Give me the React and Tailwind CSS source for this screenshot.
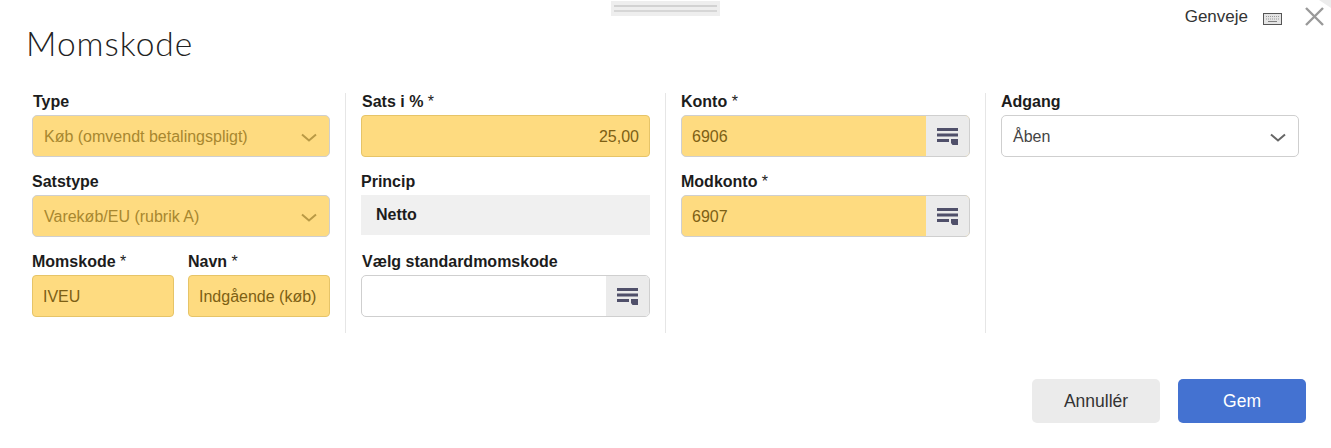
import React from 'react';

const ArrowDown = ({ className }) => (
  <svg className={className} width="16" height="9" viewBox="0 0 16 9" fill="none" stroke="currentColor" strokeWidth="2">
    <path d="M1 1.5l7 6 7-6" />
  </svg>
);

const ListIcon = () => (
  <svg width="22" height="18" viewBox="0 0 22 18" fill="#50506a">
    <rect x="0" y="1" width="21" height="3" />
    <rect x="0" y="6.5" width="21" height="3" />
    <rect x="0" y="12" width="12" height="3" />
    <path d="M14 12h7v6h-5.5l-1.5-2z" />
  </svg>
);

const Label = ({ children, inset }) => (
  <div className={`h-[22px] text-[16px] leading-[18px] font-bold text-[#1c1c1c] ${inset ? 'pl-px' : ''}`}>{children}</div>
);

const Star = () => <span className="font-normal"> *</span>;

const SelectBox = ({ value, locked }) => (
  <div
    className={`h-[42px] flex items-center justify-between pl-[11px] pr-[12px] rounded-[5px] border border-[#cfcfcf] text-[16px] ${
      locked ? 'bg-[#fedb80] text-[#a8872f]' : 'bg-white text-[#444444]'
    }`}
  >
    <span className="pt-[2px]">{value}</span>
    <ArrowDown className={`mt-[2px] ${locked ? 'text-[#b99a45]' : 'text-[#666666]'}`} />
  </div>
);

const TextBox = ({ value, right }) => (
  <div
    className={`h-[42px] flex items-center px-[10px] pt-[2px] rounded-[4px] border border-[#e6c468] bg-[#fedb80] text-[16px] text-[#7d6014] whitespace-nowrap ${
      right ? 'justify-end' : ''
    }`}
  >
    {value}
  </div>
);

const LookupBox = ({ value, filled }) => (
  <div
    className={`h-[42px] flex rounded-[5px] border border-[#cfcfcf] overflow-hidden text-[16px] text-[#7d6014] ${
      filled ? 'bg-[#fedb80]' : 'bg-white'
    }`}
  >
    <div className="flex-1 flex items-center px-[10px] pt-[2px]">{value}</div>
    <div className="w-[43px] flex items-center justify-center bg-[#ebebeb]">
      <ListIcon />
    </div>
  </div>
);

const Field = ({ label, inset, children, className = '' }) => (
  <div className={`mb-4 ${className}`}>
    <Label inset={inset}>{label}</Label>
    {children}
  </div>
);

export default function App() {
  return (
    <div className="relative w-[1331px] h-[448px] bg-white overflow-hidden font-['Liberation_Sans',Arial,sans-serif]">
      {/* drag handle */}
      <div className="absolute top-[1px] left-[611px] w-[109px] h-[15px] bg-[#eeeeee] flex flex-col justify-center gap-[3px] px-[3px]">
        <div className="h-[2px] bg-[#d2d2d2]" />
        <div className="h-[2px] bg-[#d6d6d6]" />
      </div>
      <svg className="absolute top-0 right-0" width="12" height="8" viewBox="0 0 12 8">
        <path d="M0 0h12v8z" fill="#ececec" />
      </svg>

      <div className="h-[28px] flex items-end justify-end pr-[7px]">
        <span className="text-[17px] leading-[20px] text-[#333333] mb-[1px]">Genveje</span>
        <svg className="ml-[15px] mb-[3px]" width="19" height="12" viewBox="0 0 19 12">
          <rect x="0.5" y="0.5" width="18" height="11" fill="#e4e4e4" stroke="#555555" />
          <path d="M3 3.5h13M3 6h13" stroke="#9a9a9a" strokeDasharray="1 1" />
          <path d="M5 8.5h9" stroke="#808080" />
        </svg>
        <svg className="ml-[23px] mb-[2px]" width="19" height="19" viewBox="0 0 19 19" stroke="#999999" strokeWidth="2.4">
          <path d="M1 1l17 17M18 1L1 18" />
        </svg>
      </div>

      <h1 className="h-[65px] pl-[26px] text-[33.5px] leading-[31px] tracking-[1px] font-light text-[#222222] font-['Lato',sans-serif]">Momskode</h1>

      <div className="flex h-[240px]">
        <div className="w-[346px] pl-[32px] pr-[15px] border-r border-[#e6e6e6]">
          <Field label="Type" inset>
            <SelectBox locked value="Køb (omvendt betalingspligt)" />
          </Field>
          <Field label="Satstype">
            <SelectBox locked value="Varekøb/EU (rubrik A)" />
          </Field>
          <div className="flex gap-[14px]">
            <Field label={<>Momskode<Star /></>} className="w-[142px]">
              <TextBox value="IVEU" />
            </Field>
            <Field label={<>Navn<Star /></>} className="flex-1">
              <TextBox value="Indgående (køb)" />
            </Field>
          </div>
        </div>

        <div className="w-[320px] px-[15px] border-r border-[#e6e6e6]">
          <Field label={<>Sats i %<Star /></>} inset>
            <TextBox value="25,00" right />
          </Field>
          <Field label="Princip">
            <div className="h-[40px] flex items-center pl-[15px] bg-[#f0f0f0] text-[16px] font-bold text-[#1c1c1c]">Netto</div>
          </Field>
          <div className="h-[2px]" />
          <Field label="Vælg standardmomskode" inset>
            <LookupBox />
          </Field>
        </div>

        <div className="w-[320px] px-[15px] border-r border-[#e6e6e6]">
          <Field label={<>Konto<Star /></>}>
            <LookupBox filled value="6906" />
          </Field>
          <Field label={<>Modkonto<Star /></>}>
            <LookupBox filled value="6907" />
          </Field>
        </div>

        <div className="w-[313px] pl-[15px]">
          <Field label="Adgang">
            <SelectBox value="Åben" />
          </Field>
        </div>
      </div>

      <div className="flex justify-end gap-[18px] pt-[46px] pr-[25px]">
        <button className="w-[128px] h-[44px] pt-px rounded-[5px] bg-[#ebebeb] text-[17.5px] text-[#333333]">Annullér</button>
        <button className="w-[128px] h-[44px] pt-px rounded-[5px] bg-[#4472d1] text-[17.5px] text-white">Gem</button>
      </div>
    </div>
  );
}
